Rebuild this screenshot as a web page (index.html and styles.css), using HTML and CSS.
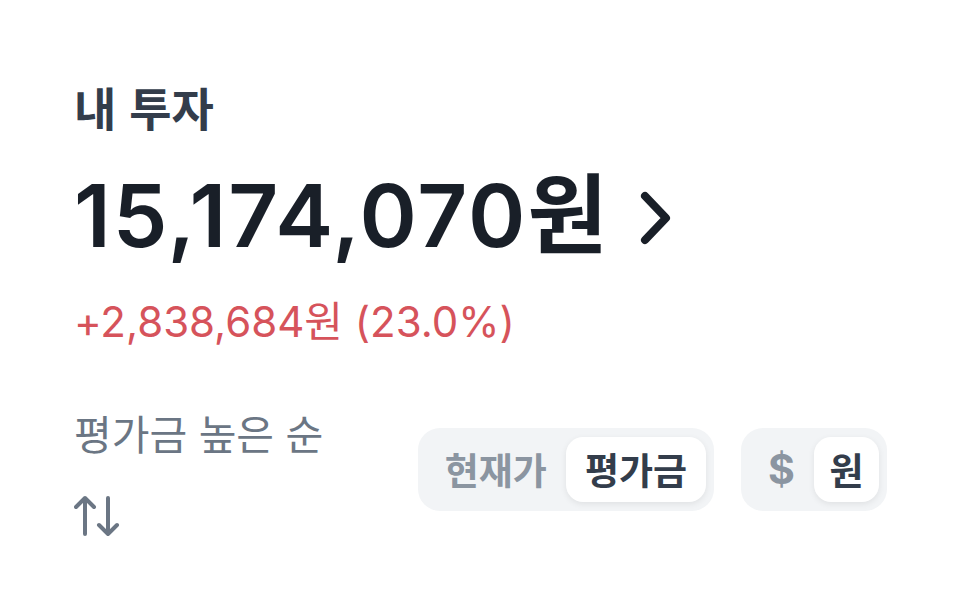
FILE: index.html
```html
<!DOCTYPE html>
<html lang="ko">
<head>
<meta charset="utf-8">
<link rel="stylesheet" href="styles.css">
</head>
<body>
<main class="page">
  <h1 class="title">내 투자</h1>
  <div class="total">
    <span class="total-value">15,174,070원</span>
    <svg class="chevron" width="32" height="54" viewBox="0 0 32 54" aria-hidden="true">
      <path d="M5 5 L26 27 L5 49" fill="none" stroke="#191f28" stroke-width="8" stroke-linecap="round" stroke-linejoin="round"/>
    </svg>
  </div>
  <div class="change">+2,838,684원 (23.0%)</div>
  <div class="toolbar">
    <div class="sort">
      <div class="sort-label">평가금 높은 순</div>
      <svg class="sort-icon" width="48" height="44" viewBox="0 0 48 44" aria-hidden="true">
        <g fill="none" stroke="#6b7684" stroke-width="4" stroke-linecap="round" stroke-linejoin="round">
          <path d="M11 40 V4 M2 13 L11 4 L20 13"/>
          <path d="M34 4 V40 M25 31 L34 40 L43 31"/>
        </g>
      </svg>
    </div>
    <div class="toggles">
      <div class="seg">
        <span class="seg-item">현재가</span>
        <span class="seg-item is-active">평가금</span>
      </div>
      <div class="seg">
        <span class="seg-item seg-small seg-dollar">$</span>
        <span class="seg-item seg-small is-active">원</span>
      </div>
    </div>
  </div>
</main>
</body>
</html>
```
FILE: styles.css
```css
html, body {
  margin: 0;
  background: #ffffff;
}
body {
  font-family: "Inter", "Noto Sans CJK KR", "Noto Sans", sans-serif;
  width: 960px;
  height: 592px;
  overflow: hidden;
}
.page {
  padding: 74px 73px 0 74px;
}
.title {
  margin: 0;
  font-family: "Noto Sans CJK KR", sans-serif;
  font-size: 46px;
  font-weight: 700;
  line-height: 64px;
  color: #333d4b;
}
.total {
  display: flex;
  align-items: center;
  gap: 31px;
  margin-top: 28px;
  height: 100px;
}
.total-value {
  font-size: 87px;
  font-weight: 600;
  color: #191f28;
  letter-spacing: 2px;
  line-height: 100px;
}
.chevron {
  display: block;
  margin-top: 4px;
}
.change {
  margin-top: 28px;
  font-size: 42px;
  font-weight: 400;
  line-height: 56px;
  color: #d6535b;
}
.toolbar {
  display: flex;
  align-items: center;
  justify-content: space-between;
  margin-top: 54px;
}
.sort {
  display: flex;
  flex-direction: column;
  gap: 34px;
}
.sort-label {
  font-family: "Noto Sans CJK KR", sans-serif;
  font-size: 41px;
  line-height: 56px;
  color: #6b7684;
}
.sort-icon {
  display: block;
}
.toggles {
  display: flex;
  gap: 27px;
  margin-top: -4px;
}
.seg {
  display: flex;
  padding: 9px 8px;
  background: #f2f4f6;
  border-radius: 22px;
}
.seg-item {
  display: flex;
  align-items: center;
  justify-content: center;
  height: 65px;
  padding: 0 19px;
  border-radius: 17px;
  font-family: "Noto Sans CJK KR", sans-serif;
  font-size: 37px;
  font-weight: 700;
  color: #8b95a1;
}
.seg-small {
  width: 65px;
  padding: 0;
  font-family: "Inter", "Noto Sans CJK KR", sans-serif;
}
.seg-dollar {
  font-size: 41px;
}
.is-active {
  background: #ffffff;
  color: #333d4b;
  box-shadow: 0 2px 6px rgba(0, 0, 0, 0.08);
}
```
